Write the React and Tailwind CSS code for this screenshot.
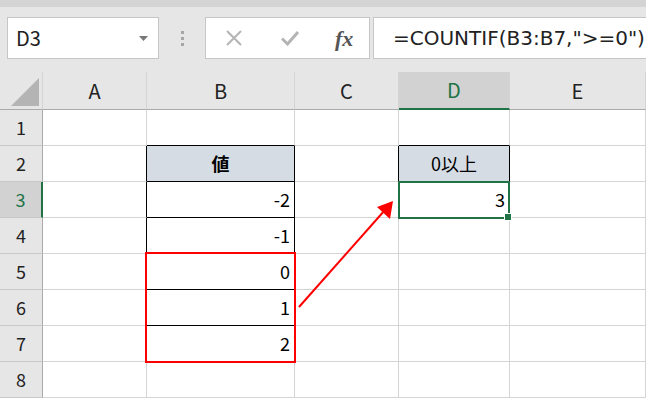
import React from "react";

const cols = ["A", "B", "C", "D", "E"];
const colW = ["w-[104px]", "w-[148px]", "w-[104px]", "w-[111px]", "w-[136px]"];

// cell values and styles, keyed by "col+row"
const cells = {
  B2: { text: "値", head: true, bold: true },
  B3: { text: "-2" },
  B4: { text: "-1" },
  B5: { text: "0" },
  B6: { text: "1" },
  B7: { text: "2" },
  D2: { text: "0以上", head: true },
  D3: { text: "3" },
};

// which cells get a black right / bottom border (the bordered tables)
const blackRight = new Set(["A2", "A3", "A4", "A5", "A6", "A7", "B2", "B3", "B4", "B5", "B6", "B7", "C2", "D2"]);
const blackBottom = new Set(["B1", "B2", "B3", "B4", "B5", "B6", "B7", "D1", "D2"]);

function Cell({ id, width }) {
  const c = cells[id];
  const right = blackRight.has(id) ? "border-r-black" : "border-r-[#d4d4d4]";
  const bottom = blackBottom.has(id) ? "border-b-black" : "border-b-[#d4d4d4]";
  return (
    <div
      className={`${width} h-[36px] border-r border-b ${right} ${bottom} flex items-center ${
        c?.head ? "justify-center bg-[#d6dce4]" : "justify-end pr-[4px] bg-white"
      } ${c?.bold ? "font-bold" : ""} text-[18px] text-black`}
    >
      {c?.text}
    </div>
  );
}

function Toolbar() {
  return (
    <div className="h-[72px] flex flex-col">
      <div className="h-[7px] bg-[#d4d4d4]" />
      <div className="flex items-start pt-[10px] pl-[7px]">
        <div className="w-[152px] h-[42px] bg-white border border-[#c6c6c6] flex items-center justify-between pl-[8px] pr-[10px]">
          <span className="text-[20px] text-[#222]">D3</span>
          <svg width="9" height="5" viewBox="0 0 9 5"><path d="M0 0h9L4.5 5z" fill="#777" /></svg>
        </div>
        <div className="w-[46px] h-[42px] flex flex-col items-center justify-center gap-[3px]">
          <div className="w-[3px] h-[3px] bg-[#a6a6a6]" />
          <div className="w-[3px] h-[3px] bg-[#a6a6a6]" />
          <div className="w-[3px] h-[3px] bg-[#a6a6a6]" />
        </div>
        <div className="w-[165px] h-[42px] bg-white border border-[#c6c6c6] flex items-center">
          <svg className="ml-[20px]" width="16" height="16" viewBox="0 0 16 16">
            <path d="M1 1L15 15M15 1L1 15" stroke="#b4b4b4" strokeWidth="2" />
          </svg>
          <svg className="ml-[39px]" width="18" height="16" viewBox="0 0 18 16">
            <path d="M1 8.5L6.5 14L17 2" stroke="#b4b4b4" strokeWidth="3" fill="none" />
          </svg>
          <span className="ml-[36px] text-[22px] italic font-bold text-[#555]" style={{ fontFamily: "'Liberation Serif', serif" }}>
            fx
          </span>
        </div>
        <div className="ml-[3px] flex-1 h-[42px] bg-white border border-r-0 border-[#c6c6c6] flex items-center pl-[19px] overflow-hidden whitespace-nowrap">
          <span className="text-[20px] text-[#222]" style={{ fontFamily: "'DejaVu Sans', sans-serif" }}>
            =COUNTIF(B3:B7,"&gt;=0")
          </span>
        </div>
      </div>
    </div>
  );
}

export default function App() {
  const rows = [1, 2, 3, 4, 5, 6, 7, 8];
  return (
    <div
      className="w-[646px] h-[398px] bg-[#e6e6e6] relative overflow-hidden"
      style={{ fontFamily: "'Noto Sans CJK JP', 'Noto Sans', sans-serif" }}
    >
      <Toolbar />

      {/* column headers */}
      <div className="flex h-[38px]">
        <div className="w-[43px] h-full border-r border-b border-r-[#d4d4d4] border-b-[#ababab] flex items-end justify-end pr-[3px] pb-[3px]">
          <svg width="28" height="28" viewBox="0 0 28 28"><path d="M0 28L28 0V28z" fill="#b4b4b4" /></svg>
        </div>
        {cols.map((c, i) =>
          c === "D" ? (
            <div key={c} className={`${colW[i]} h-full border-r border-r-[#d4d4d4] border-b-2 border-b-[#217346] bg-[#d2d2d2] flex items-center justify-center text-[20px] text-[#217346]`}>
              {c}
            </div>
          ) : (
            <div key={c} className={`${colW[i]} h-full border-r border-b border-r-[#d4d4d4] border-b-[#ababab] flex items-center justify-center text-[20px] text-[#222]`}>
              {c}
            </div>
          )
        )}
      </div>

      {rows.map((r) => (
        <div key={r} className="flex">
          {r === 3 ? (
            <div className="w-[43px] h-[36px] border-r-2 border-b border-r-[#217346] border-b-[#c8c8c8] bg-[#d2d2d2] flex items-center justify-center text-[18px] text-[#217346]">
              {r}
            </div>
          ) : (
            <div className="w-[43px] h-[36px] border-r border-b border-r-[#ababab] border-b-[#c8c8c8] flex items-center justify-center text-[18px] text-[#222]">
              {r}
            </div>
          )}
          {cols.map((c, i) => (
            <Cell key={c} id={`${c}${r}`} width={colW[i]} />
          ))}
        </div>
      ))}

      {/* red highlight around B5:B7 */}
      <div className="absolute left-[145px] top-[252px] w-[151px] h-[111px] border-2 border-[#ff0000]" />

      {/* active cell D3 */}
      <div className="absolute left-[398px] top-[181px] w-[112px] h-[38px] border-2 border-[#217346]" />
      <div className="absolute left-[504px] top-[213px] w-[8px] h-[8px] bg-[#217346] border border-white" />

      {/* arrow */}
      <svg className="absolute left-0 top-0 pointer-events-none" width="646" height="398">
        <line x1="299" y1="307" x2="385" y2="210" stroke="#ff0000" strokeWidth="2" />
        <path d="M393 201L390 219L377 207z" fill="#ff0000" />
      </svg>
    </div>
  );
}
